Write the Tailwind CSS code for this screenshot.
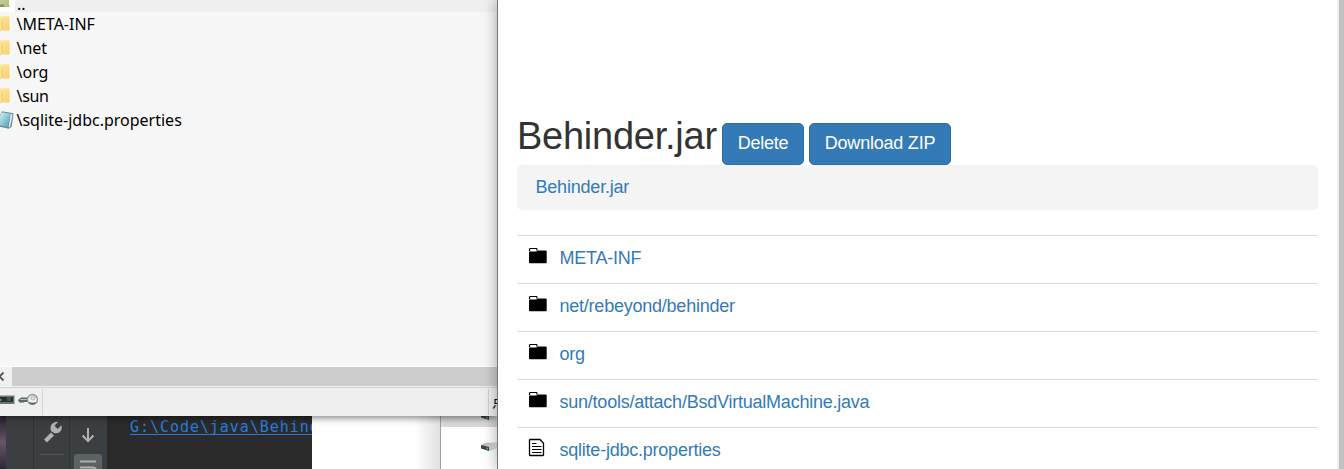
<!DOCTYPE html>
<html lang="en">
<head>
<meta charset="utf-8">
<title>Behinder.jar</title>
<script src="https://cdn.jsdelivr.net/npm/@tailwindcss/browser@4"></script>
</head>
<body class="relative flex h-[469px] w-[1344px] overflow-hidden bg-white font-['Liberation_Sans',sans-serif]">
<svg class="absolute size-0">
  <linearGradient id="yellow" x1="0" x2="1" y1="0" y2="1"><stop offset="0" stop-color="#ffe9a2"/><stop offset="1" stop-color="#f9cf68"/></linearGradient>
  <linearGradient id="blue" x1="0" x2="1" y1="0" y2="1"><stop offset="0" stop-color="#d5eff3"/><stop offset="1" stop-color="#3e9db4"/></linearGradient>
  <linearGradient id="grey" x1="0" x2="1"><stop offset="0" stop-color="#a8abb0"/><stop offset="1" stop-color="#e4e4e8"/></linearGradient>
  <symbol id="yfolder" viewBox="0 0 17 24"><path d="M0 4h9.300v1l.5.500v13.200H0z" fill="url(#yellow)"/><path d="M0 7.500h1.800v9L0 19.500z" fill="#ffe69b"/><path d="M2 7v9.500l-2 3" fill="none" stroke="#e9bd55" stroke-width=".8"/></symbol>
  <symbol id="folder" viewBox="0 0 20 18"><path d="M1.600 4V2q0-.5.5-.5h6.300q.5 0 .5.500v1.500" fill="none" stroke="#000" stroke-width="1.200"/><path d="M1 4.500h7.500l1-1h8.500q.7 0 .7.700v11.300q0 .7-.7.700H1.700q-.7 0-.7-.7z"/></symbol>
  <symbol id="drive" viewBox="0 0 16 10"><path d="M0 3 6 .5h10v6L8 9z" fill="url(#grey)"/><path d="M0 3l8 2v4L0 6.500z" fill="#404444"/><path d="M5 5.500l2 .5v1.500L5 7z" fill="#35c22d"/></symbol>
</svg>
<aside class="flex w-[497px] shrink-0 flex-col overflow-hidden">
  <section class="relative z-10 flex h-[416px] shrink-0 flex-col bg-[#f7f7f7] shadow-[0_1px_8px_rgba(0,0,0,0.6)]">
    <ul class="h-[366px] font-['Noto_Sans',sans-serif] text-[16px] leading-[25px] text-black">
      <li class="flex h-3 items-end"><svg class="h-3 w-[15px] shrink-0 bg-white" viewBox="0 0 15 12"><path d="M0 0h9v5l1 2H0z" fill="#b7c087"/><path d="M0 0h7v4H0z" fill="#c0c994"/><path d="M0 5l3-1 2 3H0z" fill="#8a9660"/></svg><span class="h-3 flex-1 bg-[#efefef] pl-0.5 leading-[2px]"><span class="inline-block translate-y-[-1px] pt-1 leading-[2px]">..</span></span></li>
      <li class="flex h-6"><svg class="h-6 w-[16.500px]"><use href="#yfolder"/></svg><span>\META-INF</span></li>
      <li class="flex h-6"><svg class="h-6 w-[16.500px]"><use href="#yfolder"/></svg><span>\net</span></li>
      <li class="flex h-6"><svg class="h-6 w-[16.500px]"><use href="#yfolder"/></svg><span>\org</span></li>
      <li class="flex h-6"><svg class="h-6 w-[16.500px]"><use href="#yfolder"/></svg><span class="tracking-[-0.3px]">\sun</span></li>
      <li class="flex h-6"><svg class="h-6 w-[16.500px]" viewBox="0 0 17 24"><path d="M2 3l12 2-2 14-3 2-9-2V7z" fill="#6b8993"/><path d="M2 4l9 1.500-3 14-8-2V8z" fill="url(#blue)"/><path d="M11 5.500l2 .5-2.500 13-1.700.8z" fill="#dfe8ea"/></svg><span>\sqlite-jdbc.properties</span></li>
    </ul>
    <div class="flex h-[22px] border-t border-b border-t-white border-b-[#d2d2d2] bg-[#f0f0f0]">
      <svg class="h-5 w-3" viewBox="0 0 12 20"><path d="M3.500 5.500-.5 9.500l4 4" fill="none" stroke="#555" stroke-width="1.800"/></svg>
      <div class="h-[19px] flex-1 bg-[#cdcdcd]"></div>
    </div>
    <div class="flex h-7 items-start bg-[#efefef]">
      <svg class="h-7 w-[42px]" viewBox="0 0 42 28"><path d="M0 7.500h14.500v8.500H0z" fill="#69777a"/><path d="M0 9h13v5H0z" fill="#26302f"/><path d="M7 9h4v4H7z" fill="#4b514d"/><path d="M0 11h1.500v2H0z" fill="#62a438"/><path d="M18 12l3-2.500h8v4.500h-5l-1 1-1-1-1 1-2-1z" fill="#5c6a6e"/><path d="M20 11.500h8" stroke="#b6bec0"/><circle cx="32.500" cy="11.500" r="5" fill="#eef2f3" stroke="#8b989d" stroke-width="1.300"/><path d="M29.500 14.500q3 2 6 0" fill="none" stroke="#3f5560" stroke-width="1.400"/><circle cx="33" cy="10" r="2" fill="#dbe1e3" stroke="#9aa6aa" stroke-width=".7"/></svg>
      <div class="mt-px h-[26px] w-px bg-[#d5d5d5]"></div>
      <div class="ml-auto mt-px h-[26px] w-px bg-[#d0d0d0]"></div>
      <div class="w-2 overflow-hidden whitespace-nowrap pl-[3px] font-['Noto_Sans_CJK_SC',sans-serif] text-[15px] leading-[26px]">点</div>
    </div>
  </section>
  <section class="flex h-[53px] shrink-0 bg-white">
    <div class="w-1.5 bg-linear-to-b from-[#28232a] via-[#66556a] to-[#2d2835]"></div>
    <div class="flex w-[101px] bg-[#3c3f41]">
      <div class="w-[28px] border-r border-[#303234]"></div>
      <svg class="h-[53px] w-9 border-r border-[#303234]" viewBox="0 0 35 53"><path d="M11.500 25l7-7" stroke="#afb1b3" stroke-width="4.200"/><path d="M17 15q-2-6 3-8.500 2-1 4-.5l-3.500 3.700 3.200 3.300 3.700-3.700q1.200 4-1.400 6.400-3 2.600-6.500 1z" fill="#afb1b3"/><path d="M6 38.500h24" stroke="#555759"/></svg>
      <svg class="h-[53px] w-[37px]" viewBox="0 0 37 53"><path d="M18 12v13M12.500 19.500l5.500 5.500 5.500-5.500" fill="none" stroke="#afb1b3" stroke-width="2"/><rect x="4" y="38" width="28" height="24" rx="3" fill="#5c6164"/><path d="M10 45.500h16M10 51.500h13q3 0 3 3" fill="none" stroke="#afb1b3" stroke-width="2"/></svg>
    </div>
    <div class="w-[205px] overflow-hidden whitespace-nowrap bg-[#2b2b2b] pl-[23px] pt-[2px] font-['DejaVu_Sans_Mono',monospace] text-[15px] leading-[18px] tracking-[0.95px] text-[#287bde]"><span class="inline-block h-[17px] border-b border-[#287bde]">G:\Code\java\Behinder</span></div>
    <div class="flex-1 bg-linear-to-r from-white from-80% to-[#e2e2e2]"></div>
    <div class="w-[57px] border-l border-[#a0a0a0]">
      <div class="flex h-[11px] justify-end bg-[#d9d9d9]"><svg class="-mt-[5px] h-[10px] w-4"><use href="#drive"/></svg></div>
      <div class="mt-[15px] flex justify-end"><svg class="h-[10px] w-4"><use href="#drive"/></svg></div>
    </div>
  </section>
</aside>
<main class="relative z-20 flex w-[847px] border-l border-[#777] bg-white shadow-[0_0_14px_rgba(0,0,0,0.35)]">
  <div class="w-[839px] pl-[19px] pr-[19px] pt-[115px] text-[18px] text-[#337ab7]">
    <div class="flex h-[50px]">
      <h1 class="w-[205px] whitespace-nowrap text-[38px] leading-[43px] tracking-[-0.25px] text-[#333]">Behinder.jar</h1>
      <button class="mt-2 h-[42px] w-[82px] rounded-[5px] border border-[#2e6da4] bg-[#337ab7] pb-[2px] tracking-[-0.22px] text-white">Delete</button>
      <button class="ml-[5px] mt-2 h-[42px] w-[142px] rounded-[5px] border border-[#2e6da4] bg-[#337ab7] pb-[2px] tracking-[-0.22px] text-white">Download ZIP</button>
    </div>
    <nav class="h-[45px] rounded-[5px] bg-[#f4f4f4] pl-[18.500px] leading-[44px] tracking-[-0.2px]"><a>Behinder.jar</a></nav>
    <ul class="mt-[25px] leading-[44px] tracking-[-0.23px]">
      <li class="flex h-12 border-t border-[#ddd] pl-[11px]"><svg class="mt-[11px] h-[18px] w-5"><use href="#folder"/></svg><a class="ml-[11.500px]">META-INF</a></li>
      <li class="flex h-12 border-t border-[#ddd] pl-[11px]"><svg class="mt-[11px] h-[18px] w-5"><use href="#folder"/></svg><a class="ml-[11.500px]">net/rebeyond/behinder</a></li>
      <li class="flex h-12 border-t border-[#ddd] pl-[11px]"><svg class="mt-[11px] h-[18px] w-5"><use href="#folder"/></svg><a class="ml-[11.500px]">org</a></li>
      <li class="flex h-12 border-t border-[#ddd] pl-[11px]"><svg class="mt-[11px] h-[18px] w-5"><use href="#folder"/></svg><a class="ml-[11.500px]">sun/tools/attach/BsdVirtualMachine.java</a></li>
      <li class="flex h-[42px] border-t border-[#ddd] pl-[11px]"><svg class="mt-[10px] h-5 w-5" viewBox="0 0 20 20"><path d="M2.200 1.500h9.800l3.500 3.800v11.500q0 .7-.7.700H2.200q-.7 0-.7-.7V2.200q0-.7.700-.7z" fill="none" stroke="#000" stroke-width="1.300"/><path d="M4 5.500h4.500M4 8.500h9.500M4 11.500h9.500M4 14.500h9.500" stroke="#000" stroke-width="1.200"/></svg><a class="ml-[11.500px]">sqlite-jdbc.properties</a></li>
    </ul>
  </div>
  <div class="w-[2px] bg-[#f0f0f0]"></div>
  <div class="flex-1 bg-[#c1c1c1]"></div>
</main>
</body>
</html>
